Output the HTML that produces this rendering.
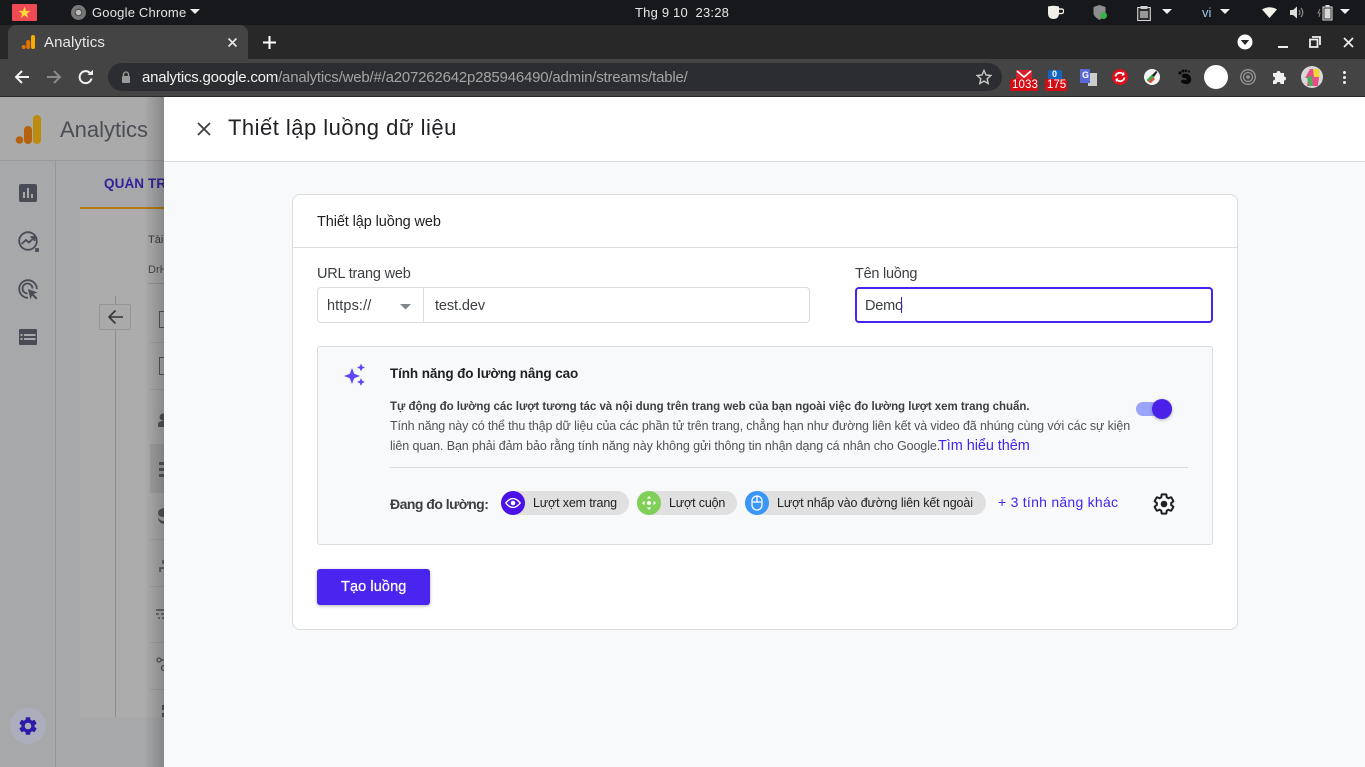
<!DOCTYPE html>
<html lang="vi"><head><meta charset="utf-8"><title>Analytics</title>
<style>
html,body{margin:0;padding:0;width:1365px;height:767px;overflow:hidden;background:#fff}
body{position:relative;font-family:"Liberation Sans","Noto Sans CJK SC",sans-serif;color:#202124}
.a{position:absolute}
.t{position:absolute;white-space:nowrap;line-height:1}
svg{position:absolute;display:block}
</style></head><body>

<!-- OS top bar -->
<div class="a" style="left:0;top:0;width:1365px;height:25px;background:#17181b"></div>
<div class="a" style="left:12px;top:4px;width:25px;height:17px;background:#ee4a55;border-radius:1px"></div>
<div class="t" style="left:18px;top:6px;font-size:13px;color:#ffd83a">★</div>
<svg style="left:70px;top:4px" width="17" height="17" viewBox="0 0 17 17"><circle cx="8.5" cy="8.5" r="7.5" fill="#777"/><circle cx="8.5" cy="8.5" r="3.3" fill="#bbb" stroke="#444" stroke-width="1"/></svg>
<div class="t" style="left:92px;top:6px;font-size:13px;color:#e4e4e4;letter-spacing:.2px">Google Chrome</div>
<svg style="left:190px;top:9px" width="10" height="6"><path d="M0 0h10L5 5z" fill="#eee"/></svg>
<div class="t" style="left:635px;top:6px;font-size:13px;color:#e8e8e8;letter-spacing:.2px">Thg 9 10&nbsp; 23:28</div>
<svg style="left:1047px;top:5px" width="17" height="15" viewBox="0 0 17 15"><path d="M1 1.500Q6.500 0 12 1.500V8q0 6-5.500 6T1 8z" fill="#f0efe8"/><path d="M12 4h2.500a1.800 1.800 0 0 1 0 4.500H12" fill="none" stroke="#f0efe8" stroke-width="1.500"/></svg>
<svg style="left:1093px;top:4px" width="15" height="17" viewBox="0 0 15 17"><path d="M6.500 1l6 2v6c0 3-3 5-6 7-3-2-6-4-6-7V3z" fill="#8d8d8d"/><circle cx="10.500" cy="11.500" r="3.500" fill="#3fb14c"/></svg>
<svg style="left:1137px;top:5px" width="14" height="16" viewBox="0 0 14 16"><path d="M.7 2.500h12.600v13H.7z" fill="#2b2b2b" stroke="#d8d8d8" stroke-width="1.100"/><path d="M3.500 1h7v3h-7z" fill="#ccc"/><path d="M3 6h8v7H3z" fill="#999"/></svg>
<svg style="left:1162px;top:9px" width="10" height="6"><path d="M0 0h10L5 5z" fill="#eee"/></svg>
<div class="t" style="left:1202px;top:6px;font-size:13px;color:#9fc6e8">vi</div>
<svg style="left:1220px;top:9px" width="10" height="6"><path d="M0 0h10L5 5z" fill="#eee"/></svg>
<svg style="left:1262px;top:7px" width="15" height="11"><path d="M0 2.500Q7.500-2 15 2.500L7.500 11z" fill="#f2f2e8"/></svg>
<svg style="left:1290px;top:6px" width="14" height="13" viewBox="0 0 14 13"><path d="M0 4h3l4-3.500v12L3 9H0z" fill="#ddd"/><path d="M9 4q2 2.500 0 5M11 2q3.500 4.500 0 9" fill="none" stroke="#888" stroke-width="1.200"/></svg>
<svg style="left:1317px;top:4px" width="16" height="17" viewBox="0 0 16 17"><path d="M6 3h9v13H6z" fill="#333" stroke="#ddd"/><path d="M8.500 1h4v2h-4z" fill="#ddd"/><path d="M7.500 4.500h6v10h-6z" fill="#d8d8d8"/><path d="M3 5L1 9h2l-1 4" fill="none" stroke="#888"/></svg>
<svg style="left:1340px;top:9px" width="10" height="6"><path d="M0 0h10L5 5z" fill="#eee"/></svg>

<!-- Tab bar -->
<div class="a" style="left:0;top:25px;width:1365px;height:34px;background:#282828"></div>
<div class="a" style="left:8px;top:25px;width:240px;height:34px;background:#444;border-radius:8px 8px 0 0"></div>
<svg style="left:21px;top:34px" width="15" height="16" viewBox="0 0 15 16"><rect x="10" y="1" width="4" height="14" rx="2" fill="#f9ab00"/><rect x="5.200" y="6" width="4" height="9" rx="2" fill="#e37400"/><circle cx="2.700" cy="13" r="2" fill="#e37400"/></svg>
<div class="t" style="left:44px;top:35px;font-size:15px;color:#e8e8e8;letter-spacing:.1px">Analytics</div>
<svg style="left:227px;top:37px" width="11" height="11"><path d="M1.500 1.500l8 8M9.500 1.500l-8 8" stroke="#e8e8e8" stroke-width="1.600"/></svg>
<svg style="left:263px;top:36px" width="13" height="13"><path d="M6.500 0v13M0 6.500h13" stroke="#fff" stroke-width="2"/></svg>
<svg style="left:1237px;top:34px" width="16" height="16"><circle cx="8" cy="8" r="7.500" fill="#fff"/><path d="M3.800 6h8.400L8 11z" fill="#282828"/></svg>
<div class="a" style="left:1278px;top:46px;width:10px;height:2px;background:#eee"></div>
<svg style="left:1309px;top:36px" width="12" height="12"><path d="M3 1h8v8M1 3.500h7.500V11H1z" fill="none" stroke="#eee" stroke-width="1.800"/></svg>
<svg style="left:1343px;top:37px" width="11" height="11"><path d="M1 1l9 9M10 1l-9 9" stroke="#eee" stroke-width="1.700"/></svg>

<!-- Omnibar -->
<div class="a" style="left:0;top:59px;width:1365px;height:37px;background:#444"></div>
<div class="a" style="left:0;top:96px;width:1365px;height:1px;background:#2a2a2a"></div>
<svg style="left:14px;top:69px" width="16" height="16" viewBox="0 0 16 16"><path d="M15 8H2M8 2L2 8l6 6" fill="none" stroke="#f1f1f1" stroke-width="2"/></svg>
<svg style="left:46px;top:69px" width="16" height="16" viewBox="0 0 16 16"><path d="M1 8h13M8 2l6 6-6 6" fill="none" stroke="#8a8a8a" stroke-width="2"/></svg>
<svg style="left:78px;top:69px" width="16" height="16" viewBox="0 0 16 16"><path d="M13.500 9.500A6 6 0 1 1 12 4" fill="none" stroke="#f1f1f1" stroke-width="2"/><path d="M9.500 6H15V.8z" fill="#f1f1f1"/></svg>
<div class="a" style="left:108px;top:63px;width:894px;height:28px;background:#2c2d30;border-radius:14px"></div>
<svg style="left:121px;top:71px" width="10" height="12" viewBox="0 0 10 12"><path d="M2.500 5V3.500a2.500 2.500 0 0 1 5 0V5" fill="none" stroke="#9a9a9a" stroke-width="1.300"/><rect x="1" y="5" width="8" height="7" rx="1" fill="#9a9a9a"/></svg>
<div class="t" style="left:142px;top:70px;font-size:15px;color:#f2f2f2;letter-spacing:-.2px">analytics.google.com<span style="color:#a4a4a4">/analytics/web/#/a207262642p285946490/admin/streams/table/</span></div>
<svg style="left:976px;top:69px" width="16" height="16" viewBox="0 0 16 16"><path d="M8 1.500l2 4.500 4.800.5-3.600 3.200 1 4.800L8 12.100l-4.200 2.400 1-4.800L1.200 6.500 6 6z" fill="none" stroke="#c8c8c8" stroke-width="1.400"/></svg>

<!-- Extensions -->
<svg style="left:1016px;top:70px" width="16" height="10"><rect width="16" height="10" fill="#d8202a"/><path d="M1 1l7 6 7-6" fill="none" stroke="#fff" stroke-width="1.800"/></svg>
<div class="a" style="left:1010px;top:79px;width:28px;height:12px;background:#d30d14;border-radius:2px"></div>
<div class="t" style="left:1012px;top:80px;font-size:11.500px;color:#fff;letter-spacing:.1px">1033</div>
<div class="a" style="left:1048px;top:70px;width:14px;height:10px;background:#1565c0;border-radius:2px 2px 0 0"></div>
<div class="t" style="left:1052px;top:70px;font-size:9px;font-weight:bold;color:#fff">0</div>
<div class="a" style="left:1045px;top:79px;width:22px;height:12px;background:#d30d14;border-radius:2px"></div>
<div class="t" style="left:1047px;top:80px;font-size:11.500px;color:#fff">175</div>
<div class="a" style="left:1088px;top:73px;width:9px;height:13px;background:#ccc"></div>
<div class="a" style="left:1080px;top:69px;width:10px;height:14px;background:#5a68d8"></div>
<div class="t" style="left:1082px;top:71px;font-size:9px;font-weight:bold;color:#fff">G</div>
<svg style="left:1112px;top:69px" width="16" height="16"><circle cx="8" cy="8" r="8" fill="#e0101a"/><path d="M3.500 7.500A4.500 4.500 0 0 1 11 5M12.500 8.500A4.500 4.500 0 0 1 5 11" fill="none" stroke="#fff" stroke-width="1.800"/><path d="M9.500 7l3-1-.5-3.500zM6.500 9l-3 1 .5 3.500z" fill="#fff"/></svg>
<svg style="left:1144px;top:69px" width="16" height="16"><circle cx="8" cy="8" r="8" fill="#f4f4f4"/><path d="M2.500 11L8 5.500l2.500 2.500L5 13z" fill="#3dab45"/><path d="M4 13l5-4.500 2 1.500-4 4z" fill="#e04848"/><path d="M8 6l4-4 1.500 1L10 8z" fill="#222"/></svg>
<svg style="left:1177px;top:69px" width="15" height="16" viewBox="0 0 15 16"><path d="M6 5c3-1 7 0 8 4s-2 7-6 6-4-2-4-3 2-2 4-1 2-2 0-2-5-1-2-4z" fill="#0a0a0a"/><circle cx="3" cy="4" r="1.600" fill="#0a0a0a"/><circle cx="6" cy="2" r="1.500" fill="#0a0a0a"/><circle cx="9" cy="1.800" r="1.300" fill="#0a0a0a"/><circle cx="12" cy="2.500" r="1.100" fill="#0a0a0a"/></svg>
<div class="a" style="left:1204px;top:65px;width:24px;height:24px;background:#fff;border-radius:50%"></div>
<svg style="left:1240px;top:69px" width="16" height="16" viewBox="0 0 16 16" fill="none" stroke="#999"><circle cx="8" cy="8" r="7.300" stroke-width="1.300"/><circle cx="8" cy="8" r="4.500" stroke-width="1.300"/><circle cx="8" cy="8" r="1.800" fill="#999" stroke="none"/></svg>
<svg style="left:1272px;top:69px" width="15" height="15" viewBox="0 0 15 15"><path d="M1 4h3.500a2 2 0 0 1 4 0H12v3.500a2 2 0 0 1 0 4V15H8.500a2 2 0 0 0-4 0H1v-3.500a2 2 0 0 0 0-4z" fill="#f1f1f1"/></svg>
<svg style="left:1301px;top:66px" width="22" height="22" viewBox="0 0 22 22"><circle cx="11" cy="11" r="11" fill="#d8d8d8"/><path d="M9 3h5v8h4l-1 9H6l1-8H4z" fill="#e84c88"/><path d="M12 3h6l1 8h-6z" fill="#f1d83a"/><path d="M6 11l5-1 1 10H8z" fill="#4cae5c"/></svg>
<div class="a" style="left:1343px;top:71px;width:3px;height:3px;background:#eee;border-radius:50%"></div>
<div class="a" style="left:1343px;top:76px;width:3px;height:3px;background:#eee;border-radius:50%"></div>
<div class="a" style="left:1343px;top:81px;width:3px;height:3px;background:#eee;border-radius:50%"></div>

<!-- Dimmed app -->
<div class="a" style="left:0;top:97px;width:164px;height:670px;background:#a7a8aa"></div>
<div class="a" style="left:0;top:97px;width:164px;height:64px;background:#aaa"></div>
<div class="a" style="left:0;top:160px;width:164px;height:1px;background:#9a9a9a"></div>
<div class="a" style="left:55px;top:161px;width:1px;height:606px;background:#959698"></div>
<div class="a" style="left:80px;top:209px;width:84px;height:508px;background:#acacac"></div>
<div class="a" style="left:80px;top:207px;width:84px;height:2px;background:#bb7a10"></div>
<svg style="left:15px;top:114px" width="27" height="31" viewBox="0 0 27 31"><rect x="18" y="1" width="8" height="29" rx="4" fill="#bd8c0e"/><rect x="9" y="12" width="8" height="18" rx="4" fill="#b5620e"/><circle cx="4.500" cy="26" r="3.800" fill="#b5620e"/></svg>
<div class="t" style="left:60px;top:119px;font-size:22px;color:#4c4e55">Analytics</div>
<div class="t" style="left:104px;top:177px;font-size:13.500px;font-weight:bold;color:#33219a;letter-spacing:.1px;width:60px;overflow:hidden;height:16px">QUẢN TRỊ</div>

<svg style="left:19px;top:184px" width="18" height="18" viewBox="0 0 18 18"><rect width="18" height="18" rx="2" fill="#4a4c55"/><path d="M4 8h2v6H4zM8 4h2v10H8zM12 10h2v4h-2z" fill="#a7a8aa"/></svg>
<svg style="left:18px;top:231px" width="21" height="21" viewBox="0 0 21 21" fill="none" stroke="#4a4c55" stroke-width="1.800"><circle cx="10" cy="10" r="8.800"/><path d="M3.500 13l4.500-4 3 2.500L16 6.500M12.500 6H16.500V10"/><path d="M18 18h2v2h-2z" fill="#4a4c55"/></svg>
<svg style="left:18px;top:279px" width="21" height="21" viewBox="0 0 21 21" fill="none" stroke="#4a4c55" stroke-width="1.800"><path d="M10 18.800A8.800 8.800 0 1 1 18.800 10"/><path d="M9.500 14.500A5 5 0 1 1 14.500 9.500"/><path d="M10 10l9.500 3.500-4 1.500 4 4-1.500 1.500-4-4-1.500 4z" fill="#4a4c55" stroke="none"/></svg>
<svg style="left:19px;top:329px" width="18" height="16" viewBox="0 0 18 16"><rect width="18" height="16" rx="1" fill="#4a4c55"/><path d="M1.500 5h2v2h-2zM1.500 9h2v2h-2zM5 5h11.500v2H5zM5 9h11.500v2H5z" fill="#a7a8aa"/></svg>

<div class="t" style="left:148px;top:235px;font-size:11px;color:#3a3a3e">Tài</div>
<div class="t" style="left:148px;top:265px;font-size:11px;color:#4a4a4e">DrH</div>
<div class="a" style="left:148px;top:283px;width:16px;height:1px;background:#959595"></div>
<div class="a" style="left:115px;top:296px;width:1px;height:421px;background:#8e8e8e"></div>
<div class="a" style="left:99px;top:304px;width:30px;height:24px;background:#aaa;border:1px solid #959595;border-radius:2px"></div>
<svg style="left:107px;top:309px" width="17" height="16" viewBox="0 0 17 16"><path d="M16 8H2M8.500 1.500L2 8l6.500 6.500" fill="none" stroke="#34353a" stroke-width="1.600"/></svg>
<div class="a" style="left:150px;top:444px;width:14px;height:48px;background:#a0a0a0"></div>
<div class="a" style="left:150px;top:342px;width:14px;height:1px;background:#a0a0a0"></div>
<div class="a" style="left:150px;top:389px;width:14px;height:1px;background:#a0a0a0"></div>
<div class="a" style="left:150px;top:445px;width:14px;height:1px;background:#a0a0a0"></div>
<div class="a" style="left:150px;top:492px;width:14px;height:1px;background:#a0a0a0"></div>
<div class="a" style="left:150px;top:539px;width:14px;height:1px;background:#a0a0a0"></div>
<div class="a" style="left:150px;top:586px;width:14px;height:1px;background:#a0a0a0"></div>
<div class="a" style="left:150px;top:642px;width:14px;height:1px;background:#a0a0a0"></div>
<div class="a" style="left:150px;top:689px;width:14px;height:1px;background:#a0a0a0"></div>
<div class="a" style="left:159px;top:311px;width:10px;height:15px;border:1.500px solid #55565b;border-right:0"></div>
<div class="a" style="left:159px;top:357px;width:10px;height:16px;border:1.500px solid #55565b;border-right:0"></div>
<svg style="left:157px;top:413px" width="7" height="14"><circle cx="6" cy="4" r="3.500" fill="#55565b"/><path d="M1 14V11q0-3 5-3h1v6z" fill="#55565b"/></svg>
<svg style="left:158px;top:461px" width="6" height="18"><path d="M1 1h5v3H1zM1 7h5v3H1zM1 13h5v3H1z" fill="#55565b"/></svg>
<svg style="left:158px;top:507px" width="6" height="18"><path d="M6 1Q0 2 0 6t6 4V1zM0 10q0 6 6 7v-3Q2 14 0 10z" fill="#55565b"/></svg>
<svg style="left:159px;top:560px" width="5" height="12"><path d="M1 12V8h4M4 1h1v2H4z" fill="none" stroke="#55565b" stroke-width="1.600"/></svg>
<svg style="left:156px;top:609px" width="8" height="12"><path d="M0 1h8M0 5h3M5 5h3M2 9h2M6 9h2" stroke="#55565b" stroke-width="1.500"/></svg>
<svg style="left:156px;top:657px" width="8" height="14" fill="none" stroke="#55565b" stroke-width="1.300"><circle cx="3" cy="3" r="2"/><path d="M5 3h3"/><circle cx="8" cy="11" r="2.500"/></svg>
<svg style="left:162px;top:705px" width="3" height="12"><path d="M0 0h2v5H0zM0 8h2v4H0z" fill="#55565b"/></svg>

<div class="a" style="left:10px;top:708px;width:36px;height:36px;background:#adaebd;border-radius:50%"></div>
<svg style="left:17px;top:715px" width="22" height="22" viewBox="0 0 24 24"><path fill="#2c1aa8" d="M19.140 12.940c.040-.3.060-.61.060-.94s-.02-.64-.07-.94l2.030-1.580a.49.490 0 0 0 .12-.61l-1.920-3.320a.49.49 0 0 0-.59-.22l-2.390.96c-.5-.38-1.030-.7-1.620-.94l-.36-2.540a.48.480 0 0 0-.48-.41h-3.840a.47.470 0 0 0-.47.410l-.36 2.540c-.59.24-1.130.57-1.620.94l-2.390-.96a.48.480 0 0 0-.59.220L2.740 8.870a.47.470 0 0 0 .12.610l2.030 1.580c-.05.3-.09.63-.09.94s.02.64.07.94l-2.030 1.580a.49.490 0 0 0-.12.610l1.920 3.320c.12.220.37.290.59.220l2.390-.96c.5.380 1.030.7 1.620.94l.36 2.540c.05.240.24.410.48.410h3.840c.24 0 .44-.17.47-.41l.36-2.540c.59-.24 1.130-.56 1.620-.94l2.390.96c.22.080.47 0 .59-.22l1.920-3.320a.46.460 0 0 0-.12-.61zM12 15.600A3.600 3.600 0 1 1 12 8.400a3.600 3.600 0 0 1 0 7.200z"/></svg>

<div class="a" style="left:144px;top:97px;width:20px;height:670px;background:linear-gradient(90deg,rgba(0,0,0,0),rgba(0,0,0,.2))"></div>

<!-- Right panel -->
<div class="a" style="left:164px;top:97px;width:1201px;height:670px;background:#f8f9fa"></div>
<div class="a" style="left:164px;top:97px;width:1201px;height:64px;background:#fff;border-bottom:1px solid #dadce0"></div>
<svg style="left:197px;top:122px" width="14" height="14"><path d="M1 1l12 12M13 1L1 13" stroke="#3c4043" stroke-width="1.800"/></svg>
<div class="t" style="left:228px;top:117px;font-size:22px;color:#202124;letter-spacing:.48px">Thiết lập luồng dữ liệu</div>

<!-- Card -->
<div class="a" style="left:292px;top:194px;width:944px;height:434px;background:#fff;border:1px solid #dadce0;border-radius:8px"></div>
<div class="t" style="left:317px;top:215px;font-size:14.500px;color:#202124;letter-spacing:-.1px">Thiết lập luồng web</div>
<div class="a" style="left:293px;top:247px;width:944px;height:1px;background:#dadce0"></div>
<div class="t" style="left:317px;top:267px;font-size:14.500px;color:#3c4043;letter-spacing:-.2px">URL trang web</div>
<div class="a" style="left:317px;top:287px;width:491px;height:34px;background:#fff;border:1px solid #dadce0;border-radius:4px"></div>
<div class="a" style="left:423px;top:288px;width:1px;height:34px;background:#dadce0"></div>
<div class="t" style="left:327px;top:299px;font-size:14.500px;color:#3c4043;letter-spacing:.1px">https://</div>
<svg style="left:400px;top:304px" width="11" height="6"><path d="M0 0h11L5.500 5.500z" fill="#80868b"/></svg>
<div class="t" style="left:435px;top:299px;font-size:14.500px;color:#3c4043;letter-spacing:-.1px">test.dev</div>
<div class="t" style="left:855px;top:267px;font-size:14.500px;color:#3c4043;letter-spacing:-.25px">Tên luồng</div>
<div class="a" style="left:855px;top:287px;width:354px;height:32px;background:#fff;border:2px solid #4523f0;border-radius:4px"></div>
<div class="t" style="left:865px;top:299px;font-size:14.500px;color:#3c4043;letter-spacing:-.2px">Demo</div>
<div class="a" style="left:901px;top:297px;width:1px;height:16px;background:#3a1fd0"></div>

<!-- Inner panel -->
<div class="a" style="left:317px;top:346px;width:894px;height:197px;background:#f8f9fa;border:1px solid #dadce0;border-radius:3px"></div>
<svg style="left:343px;top:363px" width="23" height="23" viewBox="0 0 23 23" fill="#5b4af5"><path d="M9 5l2.200 5.800L17 13l-5.800 2.200L9 21l-2.200-5.800L1 13l5.800-2.200z"/><path d="M18 .5l1.200 2.800L22 4.500l-2.800 1.200L18 8.500l-1.200-2.800L14 4.500l2.800-1.200z"/><path d="M18 15l1.200 2.800L22 19l-2.800 1.200L18 23l-1.200-2.800L14 19l2.800-1.200z"/></svg>
<div class="t" style="left:390px;top:367px;font-size:13.500px;font-weight:bold;color:#202124;letter-spacing:-.11px">Tính năng đo lường nâng cao</div>
<div class="t" style="left:390px;top:402px;font-size:11.500px;font-weight:bold;color:#3c4043;letter-spacing:-.03px">Tự động đo lường các lượt tương tác và nội dung trên trang web của bạn ngoài việc đo lường lượt xem trang chuẩn.</div>
<div class="t" style="left:390px;top:420px;font-size:12.500px;color:#4f5357;letter-spacing:-.13px">Tính năng này có thể thu thập dữ liệu của các phần tử trên trang, chẳng hạn như đường liên kết và video đã nhúng cùng với các sự kiện</div>
<div class="t" style="left:390px;top:440px;font-size:12.500px;color:#4f5357;letter-spacing:-.09px">liên quan. Bạn phải đảm bảo rằng tính năng này không gửi thông tin nhận dạng cá nhân cho Google.</div>
<div class="t" style="left:938px;top:439px;font-size:14.500px;color:#4523f0;letter-spacing:-.07px">Tìm hiểu thêm</div>
<div class="a" style="left:1136px;top:402px;width:36px;height:14px;background:#9aa5f9;border-radius:7px"></div>
<div class="a" style="left:1152px;top:399px;width:20px;height:20px;background:#4a21e8;border-radius:50%;box-shadow:0 1px 3px rgba(0,0,0,.3)"></div>
<div class="a" style="left:390px;top:467px;width:798px;height:1px;background:#dadce0"></div>
<div class="t" style="left:390px;top:497px;font-size:14px;font-weight:bold;color:#3c4043;letter-spacing:-.52px">Đang đo lường:</div>

<div class="a" style="left:501px;top:491px;width:128px;height:24px;background:#e0e0e0;border-radius:12px"></div>
<div class="a" style="left:501px;top:491px;width:24px;height:24px;background:#4a12e8;border-radius:50%"></div>
<svg style="left:505px;top:498px" width="16" height="10" viewBox="0 0 16 10"><path d="M.8 5Q8-4 15.200 5 8 14 .8 5z" fill="none" stroke="#fff" stroke-width="1.400"/><circle cx="8" cy="5" r="2.300" fill="#fff"/></svg>
<div class="t" style="left:533px;top:497px;font-size:12.500px;color:#202124;letter-spacing:-.15px">Lượt xem trang</div>

<div class="a" style="left:637px;top:491px;width:100px;height:24px;background:#e0e0e0;border-radius:12px"></div>
<div class="a" style="left:637px;top:491px;width:24px;height:24px;background:#80cf58;border-radius:50%"></div>
<svg style="left:641px;top:495px" width="16" height="16" viewBox="0 0 16 16" fill="#fff"><circle cx="8" cy="8" r="2"/><path d="M8 1l2.200 2.500H5.800zM8 15l-2.200-2.500h4.400zM1 8l2.500-2.200v4.400zM15 8l-2.500 2.200V5.800z"/></svg>
<div class="t" style="left:669px;top:497px;font-size:12.500px;color:#202124;letter-spacing:-.15px">Lượt cuộn</div>

<div class="a" style="left:745px;top:491px;width:241px;height:24px;background:#e0e0e0;border-radius:12px"></div>
<div class="a" style="left:745px;top:491px;width:24px;height:24px;background:#3a96f8;border-radius:50%"></div>
<svg style="left:751px;top:495px" width="12" height="16" viewBox="0 0 12 16" fill="none" stroke="#fff" stroke-width="1.300"><rect x="1" y="1" width="10" height="14" rx="5"/><path d="M1 7h10M6 1v6"/></svg>
<div class="t" style="left:777px;top:497px;font-size:12.500px;color:#202124;letter-spacing:-.12px">Lượt nhấp vào đường liên kết ngoài</div>

<div class="t" style="left:998px;top:495px;font-size:14px;color:#4523f0;letter-spacing:.26px">+ 3 tính năng khác</div>
<svg style="left:1152px;top:492px" width="24" height="24" viewBox="0 0 24 24"><path fill="none" stroke="#202124" stroke-width="2" d="M19.140 12.940c.040-.3.060-.61.060-.94s-.02-.64-.07-.94l2.030-1.580a.49.490 0 0 0 .12-.61l-1.920-3.320a.49.49 0 0 0-.59-.22l-2.390.96c-.5-.38-1.030-.7-1.620-.94l-.36-2.540a.48.480 0 0 0-.48-.41h-3.840a.47.470 0 0 0-.47.410l-.36 2.540c-.59.24-1.130.57-1.620.94l-2.390-.96a.48.480 0 0 0-.59.220L2.740 8.870a.47.470 0 0 0 .12.610l2.030 1.580c-.05.3-.09.63-.09.94s.02.64.07.94l-2.030 1.580a.49.490 0 0 0-.12.610l1.920 3.320c.12.220.37.290.59.220l2.390-.96c.5.380 1.030.7 1.620.94l.36 2.540c.05.240.24.410.48.410h3.840c.24 0 .44-.17.47-.41l.36-2.540c.59-.24 1.130-.56 1.620-.94l2.390.96c.22.080.47 0 .59-.22l1.920-3.320a.46.460 0 0 0-.12-.61z"/><circle cx="12" cy="12" r="3.300" fill="#202124"/></svg>

<div class="a" style="left:317px;top:569px;width:113px;height:36px;background:#4a25f0;border-radius:3px;box-shadow:0 1px 3px rgba(60,64,67,.4)"></div>
<div class="t" style="left:341px;top:580px;font-size:14.500px;font-weight:normal;color:#fff;letter-spacing:.1px;-webkit-text-stroke:.25px #fff">Tạo luồng</div>
</body></html>
